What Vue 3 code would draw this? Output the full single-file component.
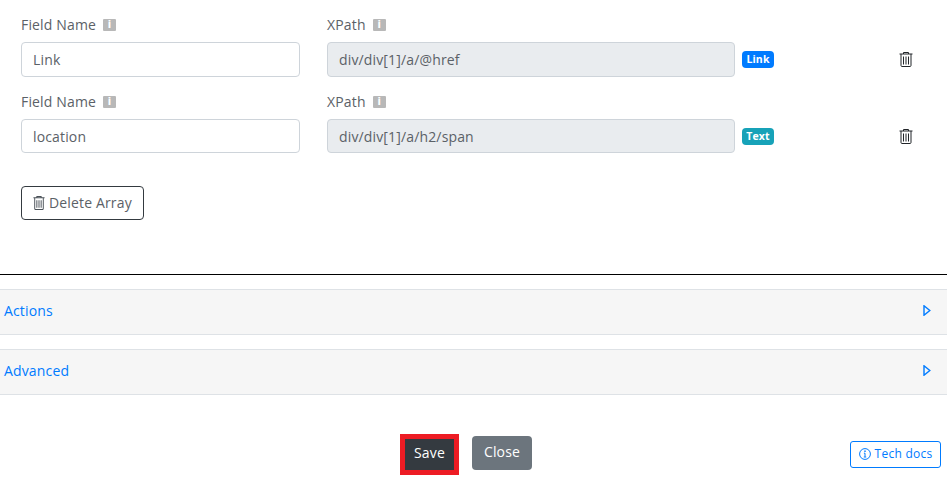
<script setup>
const rows = [
  { name: 'Link', xpath: 'div/div[1]/a/@href', badge: 'Link', kind: 'blue' },
  { name: 'location', xpath: 'div/div[1]/a/h2/span', badge: 'Text', kind: 'teal' }
]
const panels = ['Actions', 'Advanced']
</script>

<template>
  <div class="page">
    <section class="fields">
      <div v-for="r in rows" :key="r.name" class="row">
        <div class="col name">
          <div class="label">Field Name <span class="info">i</span></div>
          <div class="input">{{ r.name }}</div>
        </div>
        <div class="col path">
          <div class="label">XPath <span class="info">i</span></div>
          <div class="input readonly">{{ r.xpath }}</div>
        </div>
        <span class="badge" :class="r.kind">{{ r.badge }}</span>
        <svg class="trash" width="14" height="16" viewBox="0 0 14 16" fill="none" stroke="#212529" stroke-width="1">
          <path d="M.5 3h13M4.5 3V1.5h5V3M2 3v11.5c0 .6.4 1 1 1h8c.6 0 1-.4 1-1V3" />
          <path d="M4.5 5.5v8M7 5.5v8M9.5 5.5v8" />
        </svg>
      </div>
      <button class="delete">
        <svg width="12" height="15" viewBox="0 0 14 16" fill="none" stroke="#495057" stroke-width="1.1" preserveAspectRatio="none">
          <path d="M.5 3h13M4.5 3V1.5h5V3M2 3v11.5c0 .6.4 1 1 1h8c.6 0 1-.4 1-1V3" />
          <path d="M4.5 5.5v8M7 5.5v8M9.5 5.5v8" />
        </svg>
        Delete Array
      </button>
    </section>

    <div v-for="p in panels" :key="p" class="panel">
      <span>{{ p }}</span>
      <svg width="8" height="11" viewBox="0 0 8 11" fill="none" stroke="#007bff" stroke-width="1.4">
        <path d="M1 .8v9.4L6.8 5.5z" />
      </svg>
    </div>

    <footer class="footer">
      <button class="btn save">Save</button>
      <button class="btn close">Close</button>
      <button class="docs">
        <svg width="12" height="12" viewBox="0 0 12 12" fill="none" stroke="#007bff">
          <circle cx="6" cy="6" r="5.4" />
          <path d="M6 5.2v3.6M4.8 9h2.4M4.9 5.2H6" />
          <circle cx="6" cy="3.2" r=".5" />
        </svg>
        Tech docs
      </button>
    </footer>
  </div>
</template>

<style>
html, body { margin: 0; background: #fff; }
</style>

<style scoped>
.page {
  width: 947px;
  height: 491px;
  overflow: hidden;
  font-family: "Open Sans", sans-serif;
  font-size: 14px;
  letter-spacing: 0.15px;
  color: #5b6167;
}
.fields {
  height: 275px;
  padding-left: 21px;
  box-sizing: border-box;
  border-bottom: 1px solid #000;
}
.row {
  display: flex;
  align-items: flex-end;
  height: 77px;
}
.col { display: flex; flex-direction: column; }
.name { width: 279px; margin-right: 27px; }
.path { width: 408px; margin-right: 7px; }
.row + .row .col { margin-bottom: 1px; }
.row + .row .input { height: 32px; line-height: 33px; }
.label {
  height: 22px;
  line-height: 22px;
  margin-bottom: 6px;
  display: flex;
  align-items: center;
}
.info {
  width: 13px;
  height: 12px;
  margin-left: 7px;
  background: #b8b8b8;
  color: #fff;
  border-radius: 1px;
  font: bold 10px/12px "DejaVu Sans", sans-serif;
  letter-spacing: 0;
  text-align: center;
}
.input {
  height: 33px;
  line-height: 33px;
  padding: 0 11px;
  border: 1px solid #ced4da;
  border-radius: 4px;
  width: calc(100% - 24px);
}
.readonly { background: #e9ecef; }
.badge {
  margin-bottom: 9px;
  width: 32px;
  height: 17px;
  line-height: 17px;
  text-align: center;
  border-radius: 4px;
  color: #fff;
  font-size: 10.5px;
  font-weight: 700;
}
.blue { background: #007bff; }
.teal { background: #17a2b8; }
.trash { margin-left: 125px; margin-bottom: 10px; }
.delete {
  display: flex;
  align-items: center;
  gap: 4px;
  width: 123px;
  height: 34px;
  margin-top: 32px;
  padding: 0 0 1px 11px;
  background: #fff;
  border: 1px solid #343a40;
  border-radius: 4px;
  color: #5b6167;
  font: 14px "Open Sans", sans-serif;
  letter-spacing: 0.15px;
  white-space: nowrap;
}
.panel {
  display: flex;
  align-items: center;
  justify-content: space-between;
  height: 41px;
  margin-top: 14px;
  padding: 0 16px 3px 4px;
  background: #f6f6f6;
  border-top: 1px solid #dee2e6;
  border-bottom: 1px solid #dee2e6;
  color: #007bff;
}
.footer {
  position: relative;
  display: flex;
  justify-content: center;
  align-items: flex-start;
  gap: 13px;
  height: 41px;
  margin-top: 39px;
  padding-right: 15px;
}
.btn {
  font: 14px "Open Sans", sans-serif;
  letter-spacing: 0.15px;
  color: #fff;
  border-radius: 4px;
  height: 34px;
  border: none;
  padding: 0 0 3px;
}
.save {
  width: 59px;
  height: 41px;
  background: #343a40;
  border: 5px solid #ed1c24;
  border-radius: 0;
  box-sizing: border-box;
  padding-bottom: 5px;
}
.close { width: 60px; margin-top: 2px; background: #6c757d; }
.docs {
  position: absolute;
  left: 850px;
  top: 7px;
  width: 91px;
  height: 27px;
  display: flex;
  align-items: center;
  justify-content: center;
  gap: 4px;
  padding: 0 0 2px;
  background: #fff;
  border: 1px solid #007bff;
  border-radius: 3px;
  color: #007bff;
  font: 12px "Open Sans", sans-serif;
  letter-spacing: 0.25px;
  white-space: nowrap;
}
</style>
